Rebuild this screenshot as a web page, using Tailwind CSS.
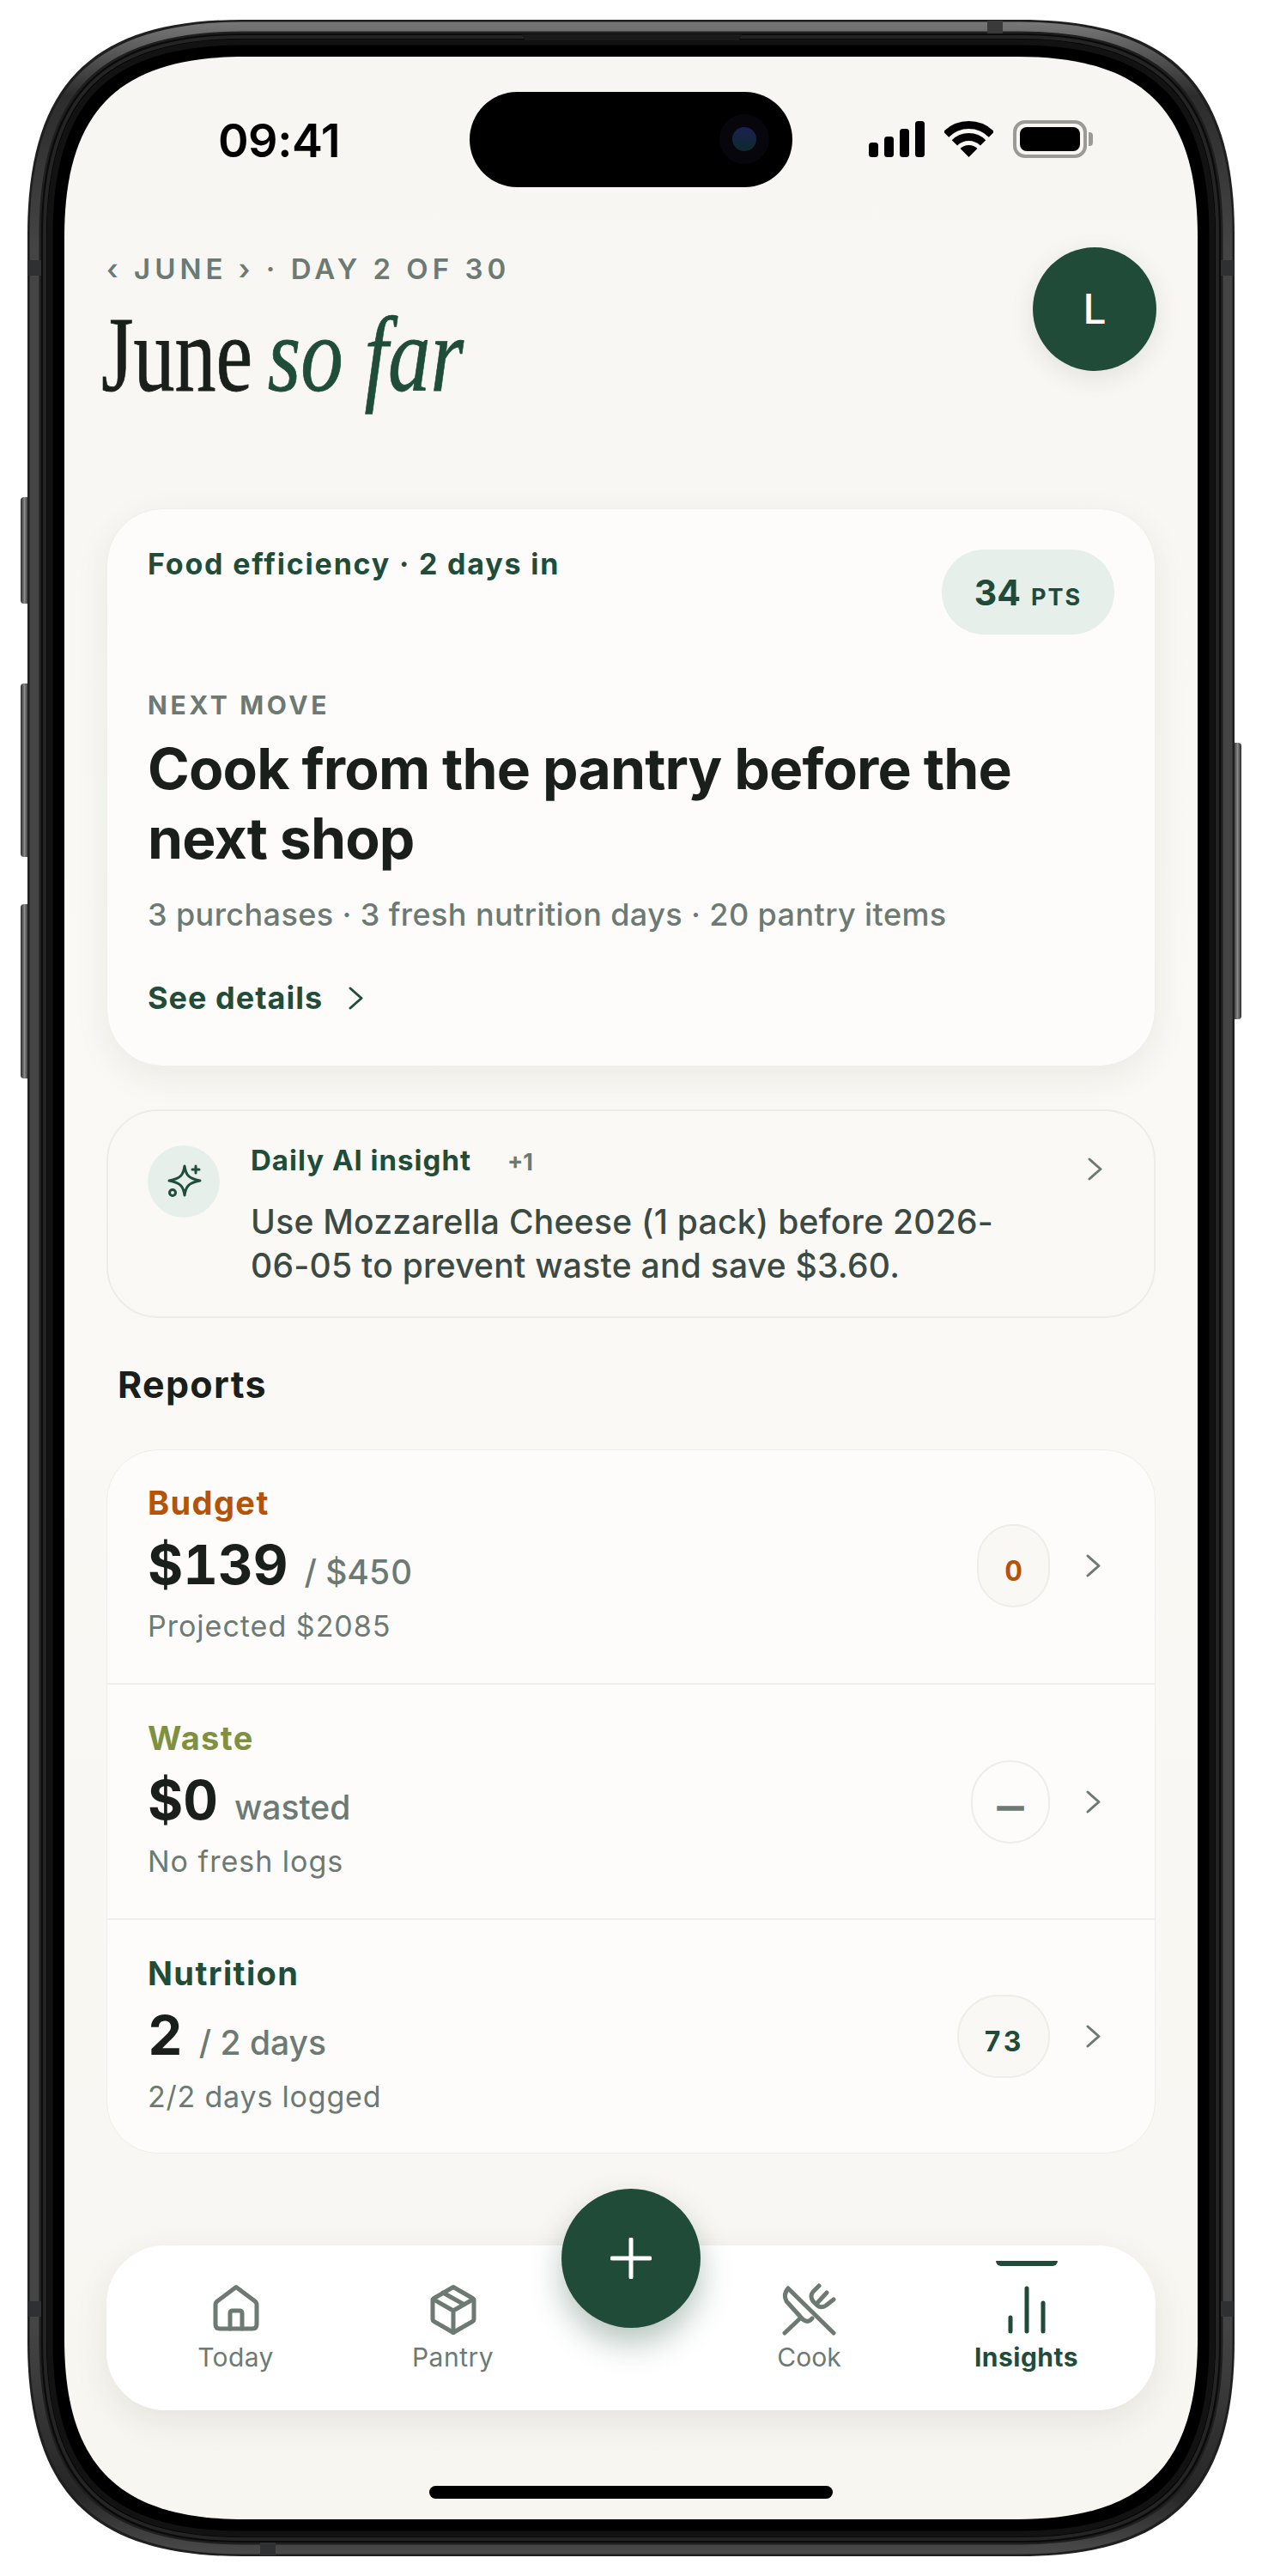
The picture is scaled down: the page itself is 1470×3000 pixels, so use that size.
<!doctype html>
<html><head><meta charset="utf-8"><script src="https://cdn.jsdelivr.net/npm/@tailwindcss/browser@4"></script></head>
<body class="bg-white">
<div class="relative w-[1470px] h-[3000px] overflow-hidden bg-white font-['Inter',sans-serif]">
  <!-- side buttons -->
  <div class="absolute left-[24px] top-[579px] w-[9px] h-[124px] rounded-l-[4px] bg-gradient-to-r from-[#2a2a2a] via-[#8a8a8a] to-[#333333]"></div>
  <div class="absolute left-[24px] top-[796px] w-[9px] h-[202px] rounded-l-[4px] bg-gradient-to-r from-[#2a2a2a] via-[#8a8a8a] to-[#333333]"></div>
  <div class="absolute left-[24px] top-[1053px] w-[9px] h-[203px] rounded-l-[4px] bg-gradient-to-r from-[#2a2a2a] via-[#8a8a8a] to-[#333333]"></div>
  <div class="absolute left-[1437px] top-[865px] w-[9px] h-[322px] rounded-r-[4px] bg-gradient-to-l from-[#2a2a2a] via-[#8a8a8a] to-[#333333]"></div>
  <!-- device frame -->
  <svg class="absolute left-0 top-0" width="1470" height="3000" viewBox="0 0 1470 3000" fill="none">
    <defs>
      <linearGradient id="band" gradientUnits="userSpaceOnUse" x1="0" y1="23" x2="0" y2="2977">
        <stop offset="0" stop-color="#7a7a7a"/><stop offset="0.012" stop-color="#5a5a5a"/><stop offset="0.03" stop-color="#2c2c2c"/><stop offset="0.09" stop-color="#444444"/><stop offset="0.91" stop-color="#444444"/><stop offset="0.975" stop-color="#262626"/><stop offset="1" stop-color="#4c4c4c"/>
      </linearGradient>
    </defs>
    <path fill="#1f1f1f" d="M282 23 H1188 C1363 23 1438 98 1438 273 V2727 C1438 2902 1363 2977 1188 2977 H282 C107 2977 32 2902 32 2727 V273 C32 98 107 23 282 23Z"/>
    <path stroke="url(#band)" stroke-width="11" d="M282 31 H1188 C1357 31 1430 104 1430 273 V2727 C1430 2896 1357 2969 1188 2969 H282 C113 2969 40 2896 40 2727 V273 C40 104 113 31 282 31Z"/>
    <path fill="#0b0b0b" d="M282 39 H1188 C1352 39 1422 109 1422 273 V2727 C1422 2891 1352 2961 1188 2961 H282 C118 2961 48 2891 48 2727 V273 C48 109 118 39 282 39Z"/>
    <path fill="#000" stroke="#242424" stroke-width="4" d="M282 43 H1188 C1349 43 1418 112 1418 273 V2727 C1418 2888 1349 2957 1188 2957 H282 C121 2957 52 2888 52 2727 V273 C52 112 121 43 282 43Z"/>
    <path fill="#000" stroke="#121212" stroke-width="7" d="M282 49 H1188 C1345 49 1412 116 1412 273 V2727 C1412 2884 1345 2951 1188 2951 H282 C125 2951 58 2884 58 2727 V273 C58 116 125 49 282 49Z"/>
    <path fill="#1a1a1a" d="M607 40 H864 L861 47 H612 Z"/>
    <rect x="1150" y="24" width="18" height="15" fill="#3a3a3a"/>
    <rect x="33" y="303" width="15" height="18" fill="#2e3032"/>
    <rect x="1422" y="303" width="15" height="18" fill="#2e3032"/>
    <rect x="33" y="2680" width="15" height="18" fill="#2e3032"/>
    <rect x="1422" y="2680" width="15" height="18" fill="#2e3032"/>
    <rect x="303" y="2961" width="18" height="15" fill="#303133"/>
    <defs>
      <linearGradient id="scr" x1="0" y1="0" x2="0" y2="1">
        <stop offset="0" stop-color="#f7f6f2"/><stop offset="0.45" stop-color="#fbf9f5"/><stop offset="1" stop-color="#f8f6f1"/>
      </linearGradient>
    </defs>
    <path fill="url(#scr)" d="M285 66 H1185 C1332 66 1395 129 1395 276 V2724 C1395 2871 1332 2934 1185 2934 H285 C138 2934 75 2871 75 2724 V276 C75 129 138 66 285 66Z"/>
  </svg>

  <!-- screen -->
  <div class="absolute left-[75px] top-[66px] w-[1320px] h-[2868px]">
    <!-- dynamic island -->
    <div class="absolute left-[472px] top-[41px] w-[376px] h-[111px] rounded-full bg-black">
      <div class="absolute left-[291px] top-[26px] w-[58px] h-[58px] rounded-full bg-[#07060c]"></div>
      <div class="absolute left-[306px] top-[41px] w-[28px] h-[28px] rounded-full bg-gradient-to-b from-[#1c2050] to-[#0c2a2c]"></div>
    </div>
    <!-- status bar -->
    <div class="flex h-[196px] items-center justify-between pl-[179px] pr-[122px]">
      <span class="text-[54px] leading-none font-semibold text-black tracking-[-0.5px]">09:41</span>
      <div class="flex items-center -mt-[4px]">
        <svg width="65" height="42" viewBox="0 0 65 42" fill="#000">
          <rect x="0" y="25" width="11" height="17" rx="3.5"/><rect x="18" y="18" width="11" height="24" rx="3.5"/><rect x="36" y="9" width="11" height="33" rx="3.5"/><rect x="54" y="0" width="11" height="42" rx="3.5"/>
        </svg>
        <svg class="ml-[23px]" width="57" height="42" viewBox="0 0 57 42" fill="none" stroke="#000" stroke-width="9">
          <path d="M2 15.5 A37.5 37.5 0 0 1 55 15.5"/><path d="M11.9 25.4 A23.5 23.5 0 0 1 45.1 25.4"/><path fill="#000" stroke="none" d="M28.5 42 L18.6 32.1 A14 14 0 0 1 38.4 32.1 Z"/>
        </svg>
        <div class="ml-[23px] flex items-center">
          <div class="w-[86px] h-[44px] rounded-[14px] border-[4px] border-[#9b9a95] p-[4px]"><div class="w-full h-full rounded-[8px] bg-black"></div></div>
          <div class="ml-[2px] w-[5px] h-[16px] rounded-r-[4px] bg-[#9b9a95]"></div>
        </div>
      </div>
    </div>

    <!-- header -->
    <div class="mt-[26px] h-[304px] flex justify-between pl-[49px] pr-[48px]">
      <div>
        <div class="mt-[2px] h-[48px] flex items-center text-[33px] font-semibold text-[#6c7a73] tracking-[5px] whitespace-nowrap">‹ JUNE › · DAY 2 OF 30</div>
        <div class="mt-[6px] h-[140px] -ml-[6px] origin-left scale-x-[0.775] whitespace-nowrap font-['Liberation_Serif',serif] text-[124px] leading-[140px] text-[#1a1f1b] [-webkit-text-stroke:0.8px_currentColor]">June <span class="inline-block -ml-[8px] origin-left scale-x-[1.03] italic text-[#1f4d3a]">so far</span></div>
      </div>
      <div class="w-[144px] h-[144px] rounded-full bg-[#204b38] flex items-center justify-center text-white text-[48px] font-medium shadow-[0_8px_28px_rgba(32,50,40,0.10)]">L</div>
    </div>

    <!-- hero card -->
    <div class="mx-[49px] h-[650px] rounded-[66px] bg-[#fdfcfa] border border-[#f1efea] pl-[47px] pr-[24px] pt-[43px] shadow-[0_12px_40px_rgba(30,40,30,0.07)]">
      <div class="flex justify-between items-start pr-[23px]">
        <div class="text-[34px] leading-[42px] font-bold text-[#1f4d3a] tracking-[1.8px]">Food efficiency · 2 days in</div>
        <div class="mt-[4px] h-[99px] w-[201px] rounded-full bg-[#e6efea] justify-center flex items-baseline pt-[25px] gap-[12px] text-[#204b38]">
          <span class="text-[41px] leading-[50px] font-bold">34</span><span class="text-[27px] font-bold tracking-[2px]">PTS</span>
        </div>
      </div>
      <div class="mt-[64px] text-[30px] leading-[36px] font-bold text-[#6c7a73] tracking-[3.6px]">NEXT MOVE</div>
      <div class="mt-[16px] text-[66px] leading-[81px] font-bold text-[#1a1f1b] tracking-[-0.85px]">Cook from the pantry before the<br>next shop</div>
      <div class="mt-[24px] text-[36px] leading-[48px] font-medium text-[#6c7a73] tracking-[0.4px]">3 purchases · 3 fresh nutrition days · 20 pantry items</div>
      <div class="mt-[49px] flex items-center gap-[30px] text-[36px] leading-[48px] font-bold text-[#1f4d3a] tracking-[1px]">See details
        <svg width="17" height="29" viewBox="0 0 17 29" fill="none" stroke="#1f4d3a" stroke-width="3" stroke-linecap="round" stroke-linejoin="round"><path d="M2 3 L15 14.5 L2 26"/></svg>
      </div>
    </div>

    <!-- insight card -->
    <div class="mt-[50px] mx-[49px] h-[243px] rounded-[60px] border-2 border-[#eeece7] pl-[46px] pr-[60px] pt-[36px] flex">
      <div class="mt-[4px] w-[84px] h-[84px] rounded-full bg-[#e6efea] shrink-0">
        <svg width="84" height="84" viewBox="0 0 84 84" fill="none" stroke="#1f4d3a" stroke-width="3" stroke-linecap="round" stroke-linejoin="round">
          <path d="M43 24 C44.5 34 47 38.5 61 41 C47 43.5 44.5 48 43 58 C41.5 48 39 43.5 25 41 C39 38.5 41.5 34 43 24Z"/><path d="M56 24 V32 M52 28 H60"/><circle cx="29" cy="55" r="3.5"/>
        </svg>
      </div>
      <div class="ml-[36px] flex-1">
        <div class="flex items-baseline gap-[42px]"><span class="text-[33px] leading-[42px] font-bold text-[#1f4d3a] tracking-[1px]">Daily AI insight</span><span class="text-[27px] font-bold text-[#6c7a73]">+1</span></div>
        <div class="mt-[22px] text-[39px] leading-[51px] font-medium text-[#3c4a44] tracking-[0.27px]">Use Mozzarella Cheese (1 pack) before 2026-<br>06-05 to prevent waste and save $3.60.</div>
      </div>
      <svg class="mt-[17px] shrink-0" width="17" height="29" viewBox="0 0 17 29" fill="none" stroke="#6c7a73" stroke-width="3" stroke-linecap="round" stroke-linejoin="round"><path d="M2 3 L15 14.5 L2 26"/></svg>
    </div>

    <!-- reports heading -->
    <div class="h-[153px] pl-[62px] pt-[51px] text-[43px] leading-[52px] font-bold text-[#1a1f1b] tracking-[1.3px]">Reports</div>

    <!-- reports card -->
    <div class="mx-[49px] h-[820px] rounded-[60px] bg-[#fdfcfa] border border-[#f0eee9] flex flex-col">
      <div class="h-[273px] flex items-center justify-between pl-[47px] pr-[63px] border-b-2 border-[#f1efeb]">
        <div class="-mt-[5px]">
          <div class="text-[38px] leading-[44px] font-bold text-[#b4530a] tracking-[1.4px]">Budget</div>
          <div class="mt-[14px] h-[72px] flex items-baseline gap-[19px]"><span class="text-[63px] leading-[72px] font-bold text-[#1a1f1b] tabular-nums">$139</span><span class="text-[39px] font-medium text-[#6c7a73] tabular-nums">/ $450</span></div>
          <div class="mt-[14px] text-[34px] leading-[44px] text-[#6c7a73] tracking-[1px]">Projected $2085</div>
        </div>
        <div class="flex items-center gap-[42px] -mt-[2px]">
          <div class="w-[85px] h-[97px] rounded-full bg-[#faf8f4] border-2 border-[#efede8] flex items-center justify-center pt-[12px] text-[32px] font-bold text-[#b4530a] tabular-nums">0</div>
          <svg width="17" height="29" viewBox="0 0 17 29" fill="none" stroke="#6c7a73" stroke-width="3" stroke-linecap="round" stroke-linejoin="round"><path d="M2 3 L15 14.5 L2 26"/></svg>
        </div>
      </div>
      <div class="h-[274px] flex items-center justify-between pl-[47px] pr-[63px] border-b-2 border-[#f1efeb]">
        <div class="-mt-[4px]">
          <div class="text-[38px] leading-[44px] font-bold text-[#7f9140] tracking-[1.4px]">Waste</div>
          <div class="mt-[14px] h-[72px] flex items-baseline gap-[19px]"><span class="text-[63px] leading-[72px] font-bold text-[#1a1f1b] tabular-nums">$0</span><span class="text-[39px] font-medium text-[#6c7a73]">wasted</span></div>
          <div class="mt-[14px] text-[34px] leading-[44px] text-[#6c7a73] tracking-[1px]">No fresh logs</div>
        </div>
        <div class="flex items-center gap-[42px]">
          <div class="w-[92px] h-[97px] rounded-full bg-[#fdfcfa] border-2 border-[#efede8] flex items-center justify-center pt-[12px] text-[30px] font-extrabold text-[#6c7a73] [-webkit-text-stroke:1.5px_currentColor]">—</div>
          <svg width="17" height="29" viewBox="0 0 17 29" fill="none" stroke="#6c7a73" stroke-width="3" stroke-linecap="round" stroke-linejoin="round"><path d="M2 3 L15 14.5 L2 26"/></svg>
        </div>
      </div>
      <div class="flex-1 flex items-center justify-between pl-[47px] pr-[63px]">
        <div class="-mt-[4px]">
          <div class="text-[38px] leading-[44px] font-bold text-[#1f4d3a] tracking-[1.4px]">Nutrition</div>
          <div class="mt-[14px] h-[72px] flex items-baseline gap-[19px]"><span class="text-[63px] leading-[72px] font-bold text-[#1a1f1b] tabular-nums">2</span><span class="text-[39px] font-medium text-[#6c7a73]">/ 2 days</span></div>
          <div class="mt-[14px] text-[34px] leading-[44px] text-[#6c7a73] tracking-[0.8px]">2/2 days logged</div>
        </div>
        <div class="flex items-center gap-[42px]">
          <div class="w-[108px] h-[97px] rounded-full bg-[#faf8f4] border-2 border-[#efede8] flex items-center justify-center pt-[12px] text-[32px] font-bold tracking-[2.5px] text-[#204b38] tabular-nums">73</div>
          <svg width="17" height="29" viewBox="0 0 17 29" fill="none" stroke="#6c7a73" stroke-width="3" stroke-linecap="round" stroke-linejoin="round"><path d="M2 3 L15 14.5 L2 26"/></svg>
        </div>
      </div>
    </div>

    <!-- tab bar -->
    <div class="relative mt-[107px] mx-[49px] h-[192px] rounded-[68px] bg-white px-[24px] flex shadow-[0_14px_40px_rgba(30,40,30,0.09)]">
      <div class="flex-1 flex flex-col items-center pt-[42px]">
        <svg width="66" height="66" viewBox="0 0 66 66" fill="none" stroke="#6c7a73" stroke-width="5" stroke-linecap="round" stroke-linejoin="round">
          <path d="M33 6.5 L55 23 Q57 24.5 57 27 V50 Q57 55 52 55 H14 Q9 55 9 50 V27 Q9 24.5 11 23 Z"/><path d="M26 55 V37 Q26 34 29 34 H37 Q40 34 40 37 V55"/>
        </svg>
        <div class="mt-[4px] text-[30px] leading-[36px] text-[#6c7a73] tracking-[0.4px]">Today</div>
      </div>
      <div class="flex-1 flex flex-col items-center pt-[42px]">
        <svg width="66" height="66" viewBox="0 0 66 66" fill="none" stroke="#6c7a73" stroke-width="5" stroke-linecap="round" stroke-linejoin="round">
          <path d="M33 6.5 L55.5 19.5 Q57 20.5 57 22 V44 Q57 45.5 55.5 46.5 L33 59.5 L10.5 46.5 Q9 45.5 9 44 V22 Q9 20.5 10.5 19.5 Z"/><path d="M9.5 20.5 L33 34 L56.5 20.5 M33 34 V59.5 M21 13 L45 26.5"/>
        </svg>
        <div class="mt-[4px] text-[30px] leading-[36px] text-[#6c7a73] tracking-[0.5px]">Pantry</div>
      </div>
      <div class="w-[162px]"></div>
      <div class="flex-1 flex flex-col items-center pt-[42px]">
        <svg width="66" height="66" viewBox="0 0 66 66" fill="none" stroke="#6c7a73" stroke-width="5" stroke-linecap="round" stroke-linejoin="round">
          <path d="M44 5 L37 12 Q33 17 37 23 L41 27 Q46 32 52 28 L61 21 M53 13 L41 26 M8 8 L61 60 M8 8 Q2 15 6 23 L25 44 Q31 49 36 43 M4 60 L23 42"/>
        </svg>
        <div class="mt-[4px] text-[30px] leading-[36px] text-[#6c7a73]">Cook</div>
      </div>
      <div class="relative flex-1 flex flex-col items-center pt-[42px]">
        <div class="absolute top-[18px] w-[72px] h-[6px] rounded-b-[6px] bg-[#204b38]"></div>
        <svg width="66" height="66" viewBox="0 0 66 66" fill="none" stroke="#204b38" stroke-width="5" stroke-linecap="round">
          <path d="M14 42 V58 M33 8 V58 M52 25 V58"/>
        </svg>
        <div class="mt-[4px] text-[30px] leading-[36px] font-bold text-[#1f4d3a] tracking-[0.5px]">Insights</div>
      </div>
      <!-- add button -->
      <div class="absolute left-[530px] -top-[66px] w-[162px] h-[162px] rounded-full bg-[#204b38] flex items-center justify-center shadow-[0_18px_36px_rgba(32,75,56,0.32)]">
        <svg width="48" height="48" viewBox="0 0 48 48" fill="none" stroke="#fff" stroke-width="5" stroke-linecap="round"><path d="M24 2 V46 M2 24 H46"/></svg>
      </div>
    </div>

    <!-- home indicator -->
    <div class="absolute left-[425px] top-[2829px] w-[470px] h-[15px] rounded-full bg-black"></div>
  </div>
</div>
</body></html>
